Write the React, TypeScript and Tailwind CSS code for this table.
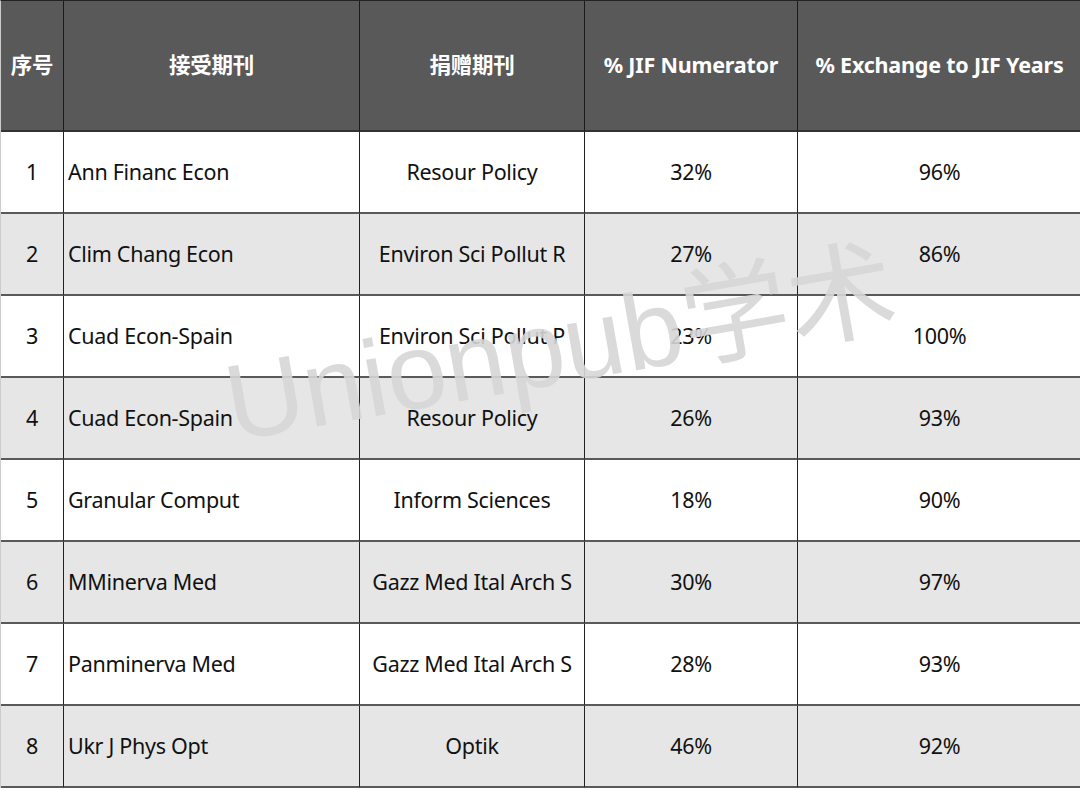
const rows = [
  ['1', 'Ann Financ Econ', 'Resour Policy', '32%', '96%'],
  ['2', 'Clim Chang Econ', 'Environ Sci Pollut R', '27%', '86%'],
  ['3', 'Cuad Econ-Spain', 'Environ Sci Pollut P', '23%', '100%'],
  ['4', 'Cuad Econ-Spain', 'Resour Policy', '26%', '93%'],
  ['5', 'Granular Comput', 'Inform Sciences', '18%', '90%'],
  ['6', 'MMinerva Med', 'Gazz Med Ital Arch S', '30%', '97%'],
  ['7', 'Panminerva Med', 'Gazz Med Ital Arch S', '28%', '93%'],
  ['8', 'Ukr J Phys Opt', 'Optik', '46%', '92%'],
];

const headers = ['序号', '接受期刊', '捐赠期刊', '% JIF Numerator', '% Exchange to JIF Years'];

export default function App() {
  return (
    <div
      className="relative w-[1080px] h-[790px] bg-white overflow-hidden"
      style={{ fontFamily: '"Noto Sans", "Open Sans", "Noto Sans CJK SC", sans-serif' }}
    >
      <div className="grid grid-cols-[63px_296px_225px_213px_283px] border-t border-l border-t-[#222] border-l-[#ccc]">
        {headers.map((h, i) => (
          <div
            key={h}
            className={`h-[131px] flex items-center justify-center bg-[#595959] text-white font-bold text-[21.5px] tracking-[-0.2px] border-b-2 border-b-[#333] ${i < 4 ? 'border-r border-r-[#1a1a1a]' : ''}`}
          >
            {h}
          </div>
        ))}
        {rows.map((r, ri) =>
          r.map((c, ci) => (
            <div
              key={ri + '-' + ci}
              className={`h-[82px] flex items-center text-[21.5px] tracking-[-0.3px] text-[#111] border-b-2 border-b-[#5a5a5a] ${ri % 2 === 1 ? 'bg-[#e6e6e6]' : 'bg-white'} ${ci < 4 ? 'border-r border-r-[#222]' : ''} ${ci === 1 ? 'justify-start pl-[4px]' : 'justify-center'}`}
            >
              {c}
            </div>
          ))
        )}
      </div>

      {/* watermark */}
      <div
        className="absolute left-[236px] top-[350px] pointer-events-none whitespace-nowrap text-[108px] leading-none text-[#d6d6d6]/90 origin-bottom-left -rotate-[10deg]"
        style={{ fontFamily: '"Liberation Sans", "Noto Sans CJK SC", sans-serif' }}
      >
        Unionpub学术
      </div>
    </div>
  );
}
